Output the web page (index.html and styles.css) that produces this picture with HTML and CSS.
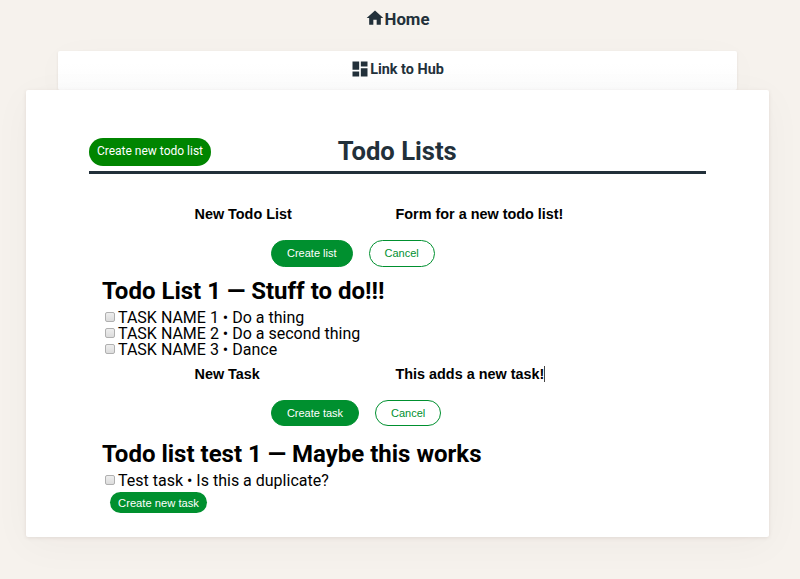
FILE: index.html
```html
<!DOCTYPE html>
<html lang="en">
<head>
<meta charset="utf-8">
<title>Todo Lists</title>
<link rel="stylesheet" href="styles.css">
</head>
<body>
<nav class="home"><a class="nav-link"><svg class="icon home-icon" viewBox="0 0 24 24"><path d="M10 20v-6h4v6h5v-8h3L12 3 2 12h3v8z"/></svg><span class="home-text">Home</span></a></nav>
<nav class="hub"><a class="nav-link"><svg class="icon" viewBox="0 0 24 24"><path d="M3 13h8V3H3v10zm0 8h8v-6H3v6zm10 0h8V11h-8v10zm0-18v6h8V3h-8z"/></svg><span class="hub-text">Link to Hub</span></a></nav>
<main class="card">
  <header class="header">
    <button class="new-list">Create new todo list</button>
    <h1 class="title">Todo Lists</h1>
  </header>
  <form class="form form-list">
    <div class="fields"><span class="field"><span>New Todo List</span></span><span class="field"><span>Form for a new todo list!</span></span></div>
    <div class="actions"><button type="button" class="pill primary">Create list</button><button type="button" class="pill">Cancel</button></div>
  </form>
  <section class="list">
    <h2 class="list-title"><span>Todo List 1 — Stuff to do!!!</span></h2>
    <ul class="tasks">
      <li class="task"><i class="check"></i><span>TASK NAME 1 • Do a thing</span></li>
      <li class="task"><i class="check"></i><span>TASK NAME 2 • Do a second thing</span></li>
      <li class="task"><i class="check"></i><span>TASK NAME 3 • Dance</span></li>
    </ul>
  </section>
  <form class="form form-task">
    <div class="fields"><span class="field"><span>New Task</span></span><span class="field"><span>This adds a new task!</span><i class="caret"></i></span></div>
    <div class="actions"><button type="button" class="pill primary">Create task</button><button type="button" class="pill">Cancel</button></div>
  </form>
  <section class="list second">
    <h2 class="list-title"><span>Todo list test 1 — Maybe this works</span></h2>
    <ul class="tasks">
      <li class="task"><i class="check"></i><span>Test task • Is this a duplicate?</span></li>
    </ul>
    <button class="new-task">Create new task</button>
  </section>
</main>
</body>
</html>
```
FILE: styles.css
```css
* { box-sizing: border-box; }
body {
  margin: 0;
  height: 579px;
  overflow: hidden;
  background: #f6f2ed;
  color: #000;
  font-family: Roboto, sans-serif;
}
button { font: inherit; margin: 0; white-space: nowrap; }
h1, h2, ul { margin: 0; padding: 0; }
.home { height: 51px; padding: 7px 6px 0 0; }
.hub {
  width: 679px;
  height: 39px;
  margin-left: 58px;
  padding: 7px 1px 0 0;
  border-radius: 2px;
  background: linear-gradient(#fff 30%, #fcfcfc);
  box-shadow: 0 1px 3px rgba(60, 20, 10, .08), 0 5px 35px rgba(60, 20, 10, .025);
}
.nav-link {
  display: flex;
  justify-content: center;
  align-items: center;
  height: 21px;
  color: #22303a;
  font-weight: 700;
}
.home-text { padding-top: 3px; font-size: 16.8px; line-height: 22px; }
.hub-text { padding-top: 2px; font-size: 14.4px; line-height: 20px; }
.icon { width: 20px; height: 20px; flex: none; fill: #22303a; }
.card {
  position: relative;
  width: 743px;
  height: 447px;
  margin-left: 26px;
  padding: 44px 63px 0;
  border-radius: 2px;
  background: #fff;
  box-shadow: 0 1px 4px rgba(60, 20, 10, .09), 0 8px 40px rgba(60, 20, 10, .035);
}
.header {
  display: grid;
  grid-template-columns: 122px 1fr 122px;
  width: 616.5px;
  height: 40px;
  border-bottom: 3px solid #22303a;
}
.new-list {
  width: 122px;
  height: 28px;
  margin-top: 4px;
  padding: 0 0 2px;
  border: 0;
  border-radius: 14px;
  background: #008500;
  color: #fff;
  font-size: 12px;
}
.title {
  color: #22303a;
  font-size: 25.6px;
  line-height: 34px;
  text-align: center;
}
.form { font-family: "Liberation Sans", Arial, sans-serif; }
.form-list { height: 105px; padding-top: 30px; }
.form-task { height: 82px; padding-top: 6px; }
.fields {
  display: grid;
  grid-template-columns: 201px 201px;
  height: 20px;
  margin-left: 105.5px;
  font-size: 14.4px;
  font-weight: 700;
  line-height: 20px;
}
.field { display: flex; align-items: center; white-space: nowrap; }
.caret { width: 1px; height: 16px; background: #444; }
.actions { display: flex; gap: 16px; margin: 16px 0 0 182px; }
.pill {
  height: 27px;
  padding: 0 15px 1px;
  border: 1px solid #00902f;
  border-radius: 14px;
  background: #fff;
  color: #00902f;
  font-size: 11px;
}
.primary { width: 81.5px; padding: 0 0 1px; background: #00902f; color: #fff; }
.form-task .primary { width: 88px; }
.form-task .pill { height: 26px; padding-bottom: 0; }
.list { margin-left: 13px; }
.second { padding-top: 2px; }
.list-title { height: 31px; font-size: 24px; line-height: 24px; }
.tasks { list-style: none; }
.task {
  display: flex;
  align-items: center;
  height: 16px;
  padding-left: 3px;
  font-size: 16px;
  line-height: 16px;
}
.check {
  width: 10px;
  height: 10px;
  margin: 0 3px 2px 0;
  border: 1px solid #b0b0b0;
  border-radius: 2px;
  background: linear-gradient(#eee, #dcdcdc);
}
.new-task {
  display: block;
  width: 97px;
  height: 21px;
  margin: 3px 0 0 8px;
  padding: 0;
  border: 0;
  border-radius: 11px;
  background: #00902f;
  color: #fff;
  font: 11.2px "Liberation Sans", Arial, sans-serif;
}
```
